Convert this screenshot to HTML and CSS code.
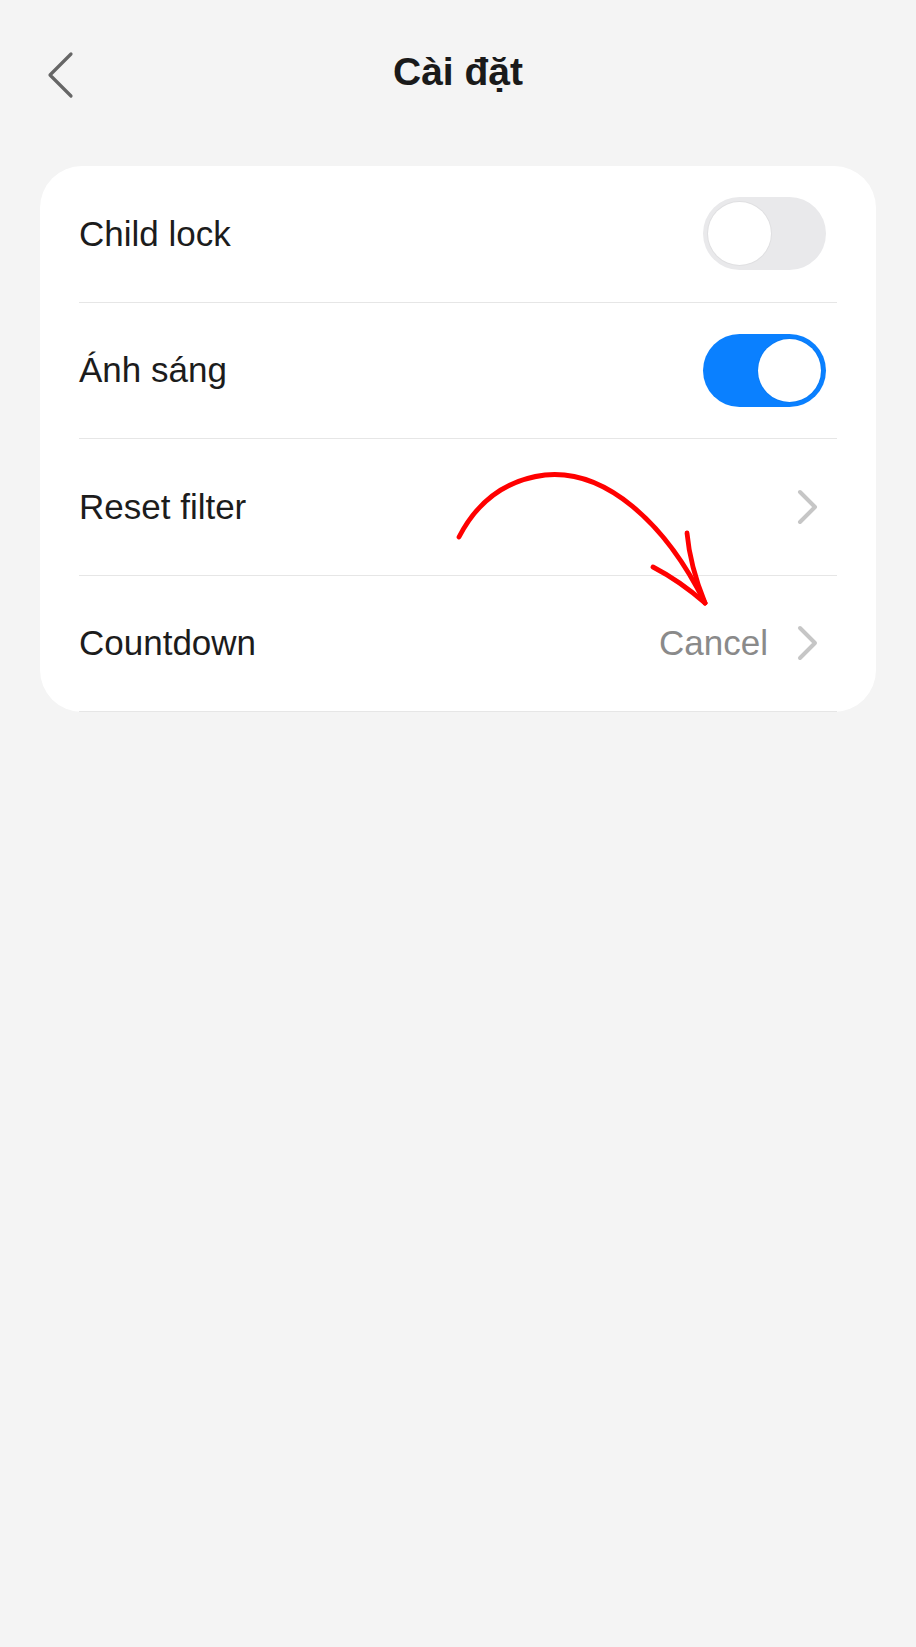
FILE: index.html
```html
<!DOCTYPE html>
<html lang="vi">
<head>
  <meta charset="UTF-8" />
  <meta name="viewport" content="width=device-width,initial-scale=1" />
  <title>Cài đặt</title>
  <link rel="stylesheet" href="styles.css">
</head>
<body>

  <!-- HEADER -->
  <div class="header">
    <div class="back">
      <svg width="30" height="48" viewBox="0 0 30 48">
        <polyline points="26,3 5,24 26,45" fill="none" stroke="#666" stroke-width="3.2" stroke-linecap="round" stroke-linejoin="round" />
      </svg>
    </div>
    <h1 class="title">Cài đặt</h1>
    <div></div>
  </div>

  <!-- SETTINGS CARD -->
  <div class="card">
    <div class="row">
      <span class="label">Child lock</span>
      <div class="toggle"><div class="knob"></div></div>
    </div>
    <div class="row">
      <span class="label">Ánh sáng</span>
      <div class="toggle on"><div class="knob"></div></div>
    </div>
    <div class="row">
      <span class="label">Reset filter</span>
      <svg class="chev" width="22" height="36" viewBox="0 0 22 36">
        <polyline points="3,3 18,18 3,33" fill="none" stroke="#c6c6c6" stroke-width="4" stroke-linecap="round" stroke-linejoin="round" />
      </svg>
    </div>
    <div class="row">
      <span class="label">Countdown</span>
      <div class="right">
        <span class="value">Cancel</span>
        <svg class="chev" width="22" height="36" viewBox="0 0 22 36">
          <polyline points="3,3 18,18 3,33" fill="none" stroke="#c6c6c6" stroke-width="4" stroke-linecap="round" stroke-linejoin="round" />
        </svg>
      </div>
    </div>
  </div>

  <!-- hand-drawn annotation -->
  <svg class="annot" width="916" height="720" viewBox="0 0 916 720">
    <g fill="none" stroke="#ff0000" stroke-width="4.8" stroke-linecap="round" stroke-linejoin="round">
      <path d="M459,537 C477,502 505,480 545,475 C605,469 665,522 705,603" />
      <path d="M653,567 Q680,581 705,603" />
      <path d="M687,533 Q690,566 705,603" />
    </g>
  </svg>

</body>
</html>
```

FILE: styles.css
```css
body { margin: 0; background: #f4f4f4; font-family: "Liberation Sans", Arial, sans-serif; color: #1c1c1c; position: relative; min-height: 1647px; }

.header { height: 144px; display: grid; grid-template-columns: 1fr auto 1fr; align-items: center; }
.back { padding-left: 45px; padding-top: 6px; display: flex; align-items: center; }
.title { margin: 0; font-size: 39px; font-weight: bold; color: #1a1a1a; }

.card { margin: 22px 40px 0; background: #fff; border-radius: 42px; padding: 0 39px; }
.row { height: 136.5px; box-sizing: border-box; border-bottom: 1px solid #e6e6e6; display: flex; align-items: center; justify-content: space-between; }
.label { font-size: 35px; }

.toggle { width: 123px; height: 73px; border-radius: 37px; background: #e9e9eb; margin-right: 11px; position: relative; }
.toggle .knob { position: absolute; top: 5px; left: 5px; width: 63px; height: 63px; border-radius: 50%; background: #fff; box-shadow: 0 0 0 1px rgba(0,0,0,.04); }
.toggle.on { background: #0a80ff; }
.toggle.on .knob { left: 55px; }

.chev { margin-right: 18px; display: block; }
.right { display: flex; align-items: center; gap: 29px; }
.value { font-size: 35px; color: #8a8a8a; }

.annot { position: absolute; left: 0; top: 0; pointer-events: none; }
```
